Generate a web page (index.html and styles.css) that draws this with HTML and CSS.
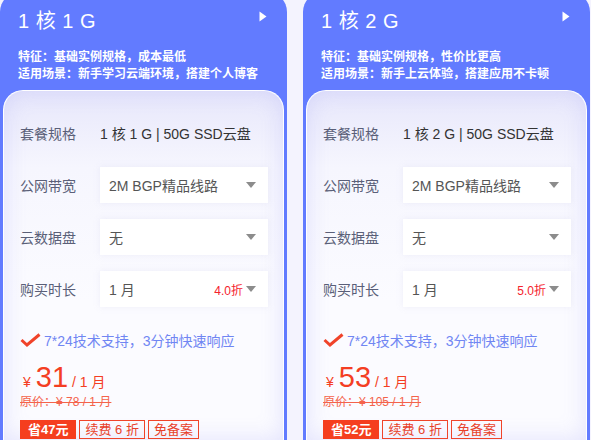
FILE: index.html
```html
<!DOCTYPE html>
<html lang="zh">
<head>
<meta charset="utf-8">
<link rel="stylesheet" href="styles.css">
</head>
<body>
<div class="wrap">
  <div class="card">
    <div class="head">
      <div class="title-row">
        <span class="title">1 核 1 G</span>
        <svg class="play" width="8" height="11" viewBox="0 0 8 11"><path d="M0.5 0.5 L7.5 5.5 L0.5 10.5 Z" fill="#fff"/></svg>
      </div>
      <div class="feat">特征：基础实例规格，成本最低</div>
      <div class="feat">适用场景：新手学习云端环境，搭建个人博客</div>
    </div>
    <div class="panel">
      <div class="row"><span class="label">套餐规格</span><span class="val">1 核 1 G | 50G SSD云盘</span></div>
      <div class="row"><span class="label">公网带宽</span><div class="select"><span class="sel-text">2M BGP精品线路</span><span class="caret"></span></div></div>
      <div class="row"><span class="label">云数据盘</span><div class="select"><span class="sel-text">无</span><span class="caret"></span></div></div>
      <div class="row"><span class="label">购买时长</span><div class="select"><span class="sel-text">1 月</span><span class="disc">4.0折</span><span class="caret"></span></div></div>
      <div class="check"><svg width="21" height="14" viewBox="0 0 21 14"><path d="M1.5 7 L7 12 L19.5 1.5" fill="none" stroke="#f0432a" stroke-width="3"/></svg><span>7*24技术支持，3分钟快速响应</span></div>
      <div class="price"><span class="yen">¥</span><span class="num">31</span><span class="unit">/ 1 月</span></div>
      <div class="orig">原价：¥ 78 / 1 月</div>
      <div class="tags"><span class="tag fill">省47元</span><span class="tag">续费 6 折</span><span class="tag">免备案</span></div>
    </div>
  </div>
  <div class="card">
    <div class="head">
      <div class="title-row">
        <span class="title">1 核 2 G</span>
        <svg class="play" width="8" height="11" viewBox="0 0 8 11"><path d="M0.5 0.5 L7.5 5.5 L0.5 10.5 Z" fill="#fff"/></svg>
      </div>
      <div class="feat">特征：基础实例规格，性价比更高</div>
      <div class="feat">适用场景：新手上云体验，搭建应用不卡顿</div>
    </div>
    <div class="panel">
      <div class="row"><span class="label">套餐规格</span><span class="val">1 核 2 G | 50G SSD云盘</span></div>
      <div class="row"><span class="label">公网带宽</span><div class="select"><span class="sel-text">2M BGP精品线路</span><span class="caret"></span></div></div>
      <div class="row"><span class="label">云数据盘</span><div class="select"><span class="sel-text">无</span><span class="caret"></span></div></div>
      <div class="row"><span class="label">购买时长</span><div class="select"><span class="sel-text">1 月</span><span class="disc">5.0折</span><span class="caret"></span></div></div>
      <div class="check"><svg width="21" height="14" viewBox="0 0 21 14"><path d="M1.5 7 L7 12 L19.5 1.5" fill="none" stroke="#f0432a" stroke-width="3"/></svg><span>7*24技术支持，3分钟快速响应</span></div>
      <div class="price"><span class="yen">¥</span><span class="num">53</span><span class="unit">/ 1 月</span></div>
      <div class="orig">原价：¥ 105 / 1 月</div>
      <div class="tags"><span class="tag fill">省52元</span><span class="tag">续费 6 折</span><span class="tag">免备案</span></div>
    </div>
  </div>
</div>
</body>
</html>
```
FILE: styles.css
```css
* { box-sizing: border-box; }
html, body {
  margin: 0;
  padding: 0;
  background: #f4f3fe;
  overflow: hidden;
  width: 591px;
  height: 440px;
  font-family: "Liberation Sans", "Noto Sans CJK SC", sans-serif;
}
.wrap {
  display: flex;
  gap: 16px;
  margin-top: -8px;
}
.card {
  flex: 0 0 287px;
  width: 287px;
  background: #627bff;
  border-radius: 20px 20px 0 0;
  padding: 3px 3px 0 3px;
  height: 448px;
  display: flex;
  flex-direction: column;
}
.head {
  padding: 12px 15px 0 15px;
  color: #fff;
}
.title-row {
  display: flex;
  justify-content: space-between;
  align-items: flex-start;
  height: 28px;
}
.title {
  font-size: 20px;
  line-height: 28px;
  letter-spacing: 0.5px;
}
.play {
  margin-top: 4px;
  margin-right: 2px;
}
.feat {
  font-size: 12px;
  line-height: 17px;
  font-weight: 600;
}
.title-row + .feat { margin-top: 14px; }
.panel {
  flex: 1;
  margin-top: 7px;
  border: 1.5px solid #fff;
  border-bottom: 0;
  border-radius: 20px 20px 0 0;
  background: linear-gradient(180deg, #e7e7fb 0%, #f6f6fe 22%, #fbfbff 60%, #fbfbff 100%);
  box-shadow: inset 0 0 22px rgba(140, 140, 245, 0.22);
  padding: 24px 15px 0 16px;
  display: flex;
  flex-direction: column;
}
.row {
  display: flex;
  align-items: center;
  height: 36px;
  margin-bottom: 16px;
  font-size: 14px;
}
.label {
  width: 80px;
  color: #5a5f78;
}
.val { color: #333; }
.select {
  width: 168px;
  height: 36px;
  background: #fff;
  display: flex;
  align-items: center;
  padding: 0 12px 0 9px;
  box-shadow: 0 0 6px rgba(200, 200, 230, 0.25);
}
.sel-text {
  flex: 1;
  color: #555;
}
.disc {
  color: #f5222d;
  font-size: 12px;
  margin-right: 3px;
}
.caret {
  width: 0;
  height: 0;
  border-left: 5px solid transparent;
  border-right: 5px solid transparent;
  border-top: 6px solid #8c8c8c;
}
.check {
  display: flex;
  align-items: center;
  gap: 3px;
  margin-top: 7px;
  height: 20px;
  font-size: 14px;
  color: #7086f3;
}
.price {
  margin-top: 11px;
  display: flex;
  align-items: baseline;
  color: #f43e23;
  height: 32px;
  padding-left: 3px;
}
.yen { font-size: 14px; margin-right: 5px; }
.num { font-size: 29px; line-height: 32px; margin-right: 4px; }
.unit { font-size: 14px; }
.orig {
  font-size: 12px;
  line-height: 16px;
  color: #f4634b;
  text-decoration: line-through;
  margin-top: 1px;
}
.tags {
  display: flex;
  gap: 3px;
  margin-top: 10px;
}
.tag {
  height: 19px;
  line-height: 17px;
  font-size: 13px;
  border: 1px solid #f0442a;
  color: #e8412a;
  padding: 0 5px;
}
.tag.fill {
  background: #f53e1f;
  color: #fff;
  border-color: #f53e1f;
  font-weight: 600;
  padding: 0 7px;
}
```
